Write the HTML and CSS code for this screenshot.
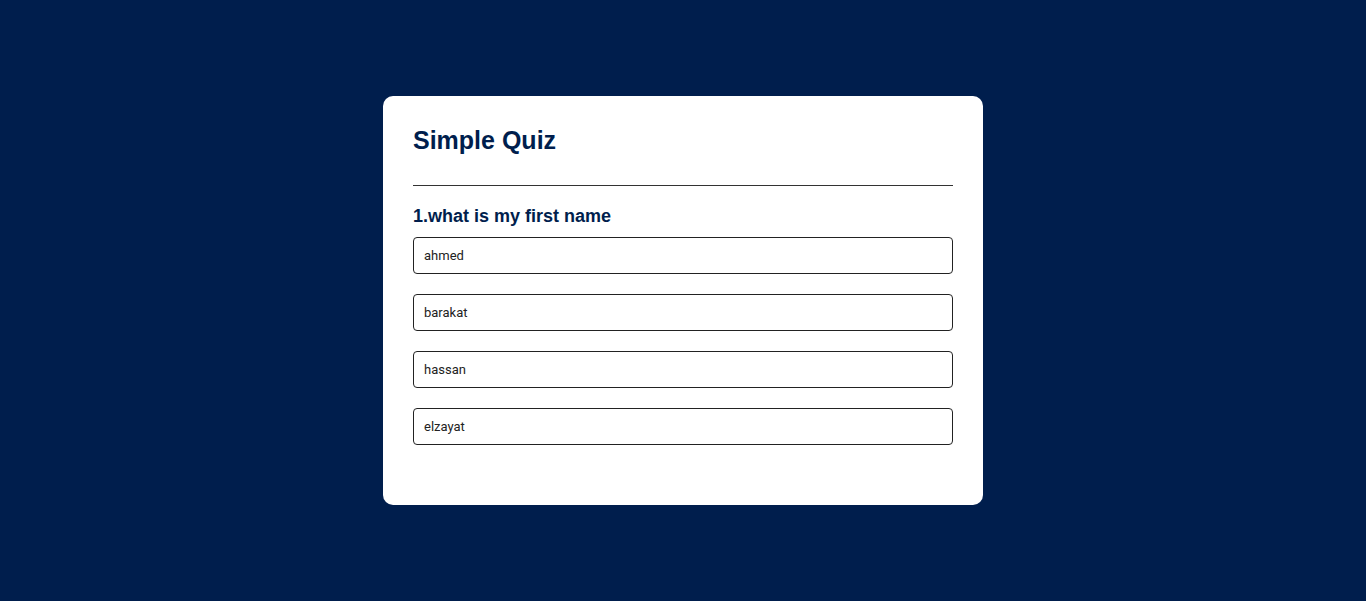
FILE: index.html
```html
<!DOCTYPE html>
<html>
<head>
<meta charset="utf-8">
<link rel="stylesheet" href="styles.css">
</head>
<body>
<div class="app">
  <h1 class="title">Simple Quiz</h1>
  <div class="quiz">
    <h2 class="question">1.what is my first name</h2>
    <div class="answers">
      <button class="btn">ahmed</button>
      <button class="btn">barakat</button>
      <button class="btn">hassan</button>
      <button class="btn">elzayat</button>
    </div>
  </div>
</div>
</body>
</html>
```
FILE: styles.css
```css
* { box-sizing: border-box; }
body {
  margin: 0;
  background: #001e4d;
  font-family: "Liberation Sans", Arial, sans-serif;
  height: 601px;
  padding-top: 96px;
}
.app {
  background: #fff;
  width: 600px;
  margin: 0 auto;
  border-radius: 10px;
  padding: 30px 30px 30px;
}
.title {
  margin: 0;
  font-size: 25px;
  font-weight: bold;
  color: #001e4d;
  padding-bottom: 30px;
  border-bottom: 1px solid #333;
}
.quiz {
  padding: 20px 0 0;
}
.question {
  margin: 0 0 10px;
  font-size: 18px;
  font-weight: bold;
  color: #001e4d;
}
.answers {
  display: flex;
  flex-direction: column;
  gap: 20px;
  padding-bottom: 30px;
}
.btn {
  display: block;
  width: 100%;
  height: 37px;
  background: #fff;
  color: #222;
  border: 1px solid #222;
  border-radius: 4px;
  padding: 0 10px;
  text-align: left;
  font-family: Roboto, "Liberation Sans", sans-serif;
  font-size: 13px;
}
```
